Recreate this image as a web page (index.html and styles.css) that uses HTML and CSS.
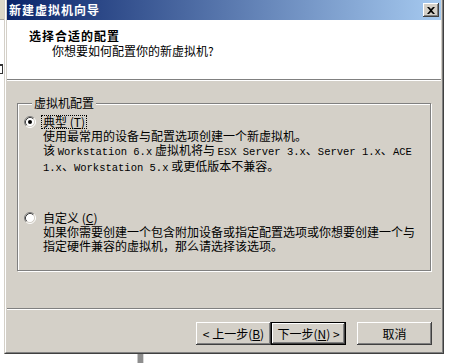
FILE: index.html
```html
<!DOCTYPE html>
<html lang="zh-CN">

<head>
  <meta charset="UTF-8">
  <meta name="viewport" content="width=device-width, initial-scale=1.0">
  <title>新建虚拟机向导</title>
  <link rel="stylesheet" href="styles.css">
</head>

<body>
  <div class="screen">
    <div class="row">
      <div class="side side-left">
        <div class="side-top"></div>
        <div class="side-mark"></div>
      </div>

      <div class="dialog">
        <div class="frame">
          <div class="titlebar">
            <span class="title">新建虚拟机向导</span>
            <button type="button" class="close" aria-label="关闭">
              <svg width="8" height="7" viewBox="0 0 8 7">
                <path d="M0 0h2l2 2 2-2h2L5 3.5 8 7H6L4 5 2 7H0l3-3.5z" fill="#000" />
              </svg>
            </button>
          </div>

          <div class="header">
            <div class="header-title">选择合适的配置</div>
            <div class="header-sub">你想要如何配置你的新虚拟机?</div>
          </div>

          <div class="content">
            <fieldset class="group">
              <legend>虚拟机配置</legend>

              <div class="option">
                <span class="radio">
                  <svg width="12" height="12" viewBox="0 0 12 12">
                    <circle cx="6" cy="6" r="4.5" fill="#fff" />
                    <path d="M2.11 9.89A5.5 5.5 0 0 1 9.89 2.11" stroke="#808080" fill="none" />
                    <path d="M9.89 2.11A5.5 5.5 0 0 1 2.11 9.89" stroke="#fff" fill="none" />
                    <path d="M2.82 9.18A4.5 4.5 0 0 1 9.18 2.82" stroke="#404040" fill="none" />
                    <path d="M9.18 2.82A4.5 4.5 0 0 1 2.82 9.18" stroke="#d4d0c8" fill="none" />
                    <circle cx="6" cy="6" r="2" fill="#000" />
                  </svg>
                </span>
                <div class="option-text">
                  <div class="option-label focused">典型 (<u>T</u>)</div>
                  <div>使用最常用的设备与配置选项创建一个新虚拟机。</div>
                  <div>该 <span class="en">Workstation 6.x</span> 虚拟机将与 <span class="en">ESX Server 3.x</span>、<span class="en">Server 1.x</span>、<span class="en">ACE</span></div>
                  <div><span class="en">1.x</span>、<span class="en">Workstation 5.x</span> 或更低版本不兼容。</div>
                </div>
              </div>

              <div class="option option-second">
                <span class="radio">
                  <svg width="12" height="12" viewBox="0 0 12 12">
                    <circle cx="6" cy="6" r="4.5" fill="#fff" />
                    <path d="M2.11 9.89A5.5 5.5 0 0 1 9.89 2.11" stroke="#808080" fill="none" />
                    <path d="M9.89 2.11A5.5 5.5 0 0 1 2.11 9.89" stroke="#fff" fill="none" />
                    <path d="M2.82 9.18A4.5 4.5 0 0 1 9.18 2.82" stroke="#404040" fill="none" />
                    <path d="M9.18 2.82A4.5 4.5 0 0 1 2.82 9.18" stroke="#d4d0c8" fill="none" />
                  </svg>
                </span>
                <div class="option-text">
                  <div class="option-label">自定义 (<u>C</u>)</div>
                  <div>如果你需要创建一个包含附加设备或指定配置选项或你想要创建一个与</div>
                  <div>指定硬件兼容的虚拟机，那么请选择该选项。</div>
                </div>
              </div>
            </fieldset>
          </div>

          <div class="footer">
            <button type="button" class="btn">&lt; 上一步(<u>B</u>)</button>
            <button type="button" class="btn btn-default">下一步(<u>N</u>) &gt;</button>
            <button type="button" class="btn btn-cancel">取消</button>
          </div>
        </div>
      </div>

      <div class="side side-right"></div>
    </div>

    <div class="below">
      <div class="below-bar"></div>
    </div>
  </div>
</body>

</html>
```

FILE: styles.css
```css
* {
  box-sizing: border-box;
}

body {
  margin: 0;
  background: #ffffff;
  font-family: "Noto Sans CJK SC", "Liberation Sans", sans-serif;
  font-size: 12px;
  color: #000;
  overflow: hidden;
}

.screen {
  width: 455px;
  height: 363px;
  display: flex;
  flex-direction: column;
}

.row {
  display: flex;
  height: 354px;
}

/* what shows of the desktop behind the dialog */
.side-left {
  width: 4px;
  overflow: hidden;
  background: #ffffff;
}

.side-top {
  height: 20px;
  background: #dcd8c8;
  border-bottom: 1px solid #a8a8a0;
}

.side-mark {
  margin-top: 44px;
  width: 3px;
  height: 10px;
  border-top: 2px solid #333;
  border-right: 1px solid #333;
  border-bottom: 1px solid #333;
}

.side-right {
  width: 11px;
  background: #ffffff;
}

.below {
  height: 9px;
  background: #ffffff;
}

.below-bar {
  margin-left: 137px;
  width: 7px;
  height: 9px;
  background: #8e8e8e;
  border-left: 1px solid #c8c8c8;
  border-right: 1px solid #d8d8d8;
}

/* dialog window */
.dialog {
  width: 440px;
  height: 354px;
  border-left: 1px solid #d4d0c8;
  border-right: 1px solid #404040;
  border-bottom: 1px solid #404040;
}

.frame {
  height: 100%;
  display: flex;
  flex-direction: column;
  background: #d4d0c8;
  border-left: 1px solid #ffffff;
  border-right: 1px solid #808080;
  border-bottom: 1px solid #808080;
  padding: 0 1px 1px 1px;
}

.titlebar {
  height: 20px;
  display: flex;
  align-items: center;
  justify-content: space-between;
  padding: 0 2px 0 2px;
  background: linear-gradient(to right, #0a246a, #a6caf0);
}

.title {
  color: #ffffff;
  font-weight: bold;
  letter-spacing: 1px;
  line-height: 14px;
}

.close {
  width: 16px;
  height: 14px;
  padding: 0;
  display: flex;
  align-items: center;
  justify-content: center;
  background: #d4d0c8;
  border: none;
  box-shadow: inset -1px -1px #404040, inset 1px 1px #ffffff, inset -2px -2px #808080;
}

.header {
  height: 60px;
  background: #ffffff;
  border-bottom: 1px solid #808080;
  padding: 9px 0 0 22px;
  line-height: 14px;
}

.header-title {
  font-weight: bold;
  letter-spacing: 1px;
}

.header-sub {
  margin: 1px 0 0 23px;
}

.content {
  height: 228px;
  border-top: 1px solid #ffffff;
  padding: 15px 10px 0 10px;
}

.group {
  width: 414px;
  height: 175px;
  margin: 0;
  padding: 5px 6px 0 6px;
  border: 1px solid #808080;
  box-shadow: 1px 1px 0 #ffffff, inset 1px 1px 0 #ffffff;
}

.group legend {
  margin-left: 8px;
  padding: 0 2px;
  line-height: 14px;
  background: #d4d0c8;
}

.option {
  display: flex;
  line-height: 14px;
  white-space: nowrap;
}

.option-second {
  margin-top: 36px;
}

.radio {
  width: 12px;
  height: 12px;
  margin: 1px 7px 0 0;
}

.radio svg {
  display: block;
}

.option-label {
  display: inline-block;
  margin-left: -2px;
  padding: 0 1px;
  line-height: 12px;
  border: 1px solid transparent;
}

.option-label.focused {
  border: 1px dotted #000;
}

.en {
  font-family: "Liberation Mono", monospace;
  font-size: 10.5px;
}

.footer {
  flex: 1;
  display: flex;
  justify-content: flex-end;
  align-items: flex-start;
  border-top: 1px solid #808080;
  box-shadow: inset 0 1px #ffffff;
  padding: 13px 9px 0 0;
}

.btn {
  width: 75px;
  height: 23px;
  padding: 0;
  font-family: "Noto Sans CJK SC", "Liberation Sans", sans-serif;
  font-size: 12px;
  line-height: 14px;
  color: #000;
  background: #d4d0c8;
  border: none;
  box-shadow: inset -1px -1px #404040, inset 1px 1px #ffffff, inset -2px -2px #808080;
}

.btn-default {
  border: 1px solid #000;
}

.btn-cancel {
  margin-left: 11px;
}
```
